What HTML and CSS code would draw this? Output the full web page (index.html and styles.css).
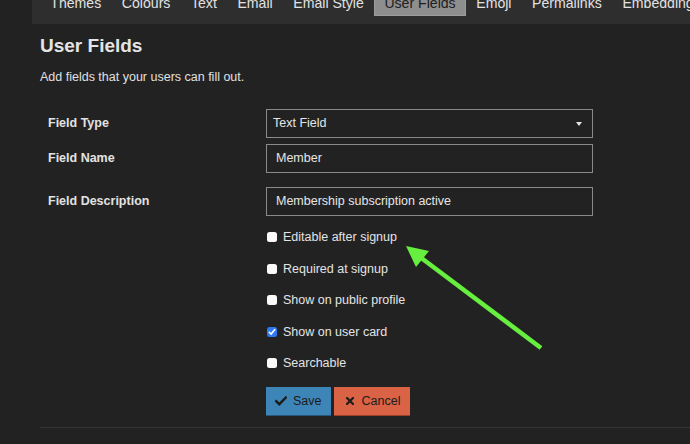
FILE: index.html
```html
<!DOCTYPE html>
<html lang="en">
<head>
<meta charset="utf-8">
<title>User Fields</title>
<link rel="stylesheet" href="styles.css">
</head>
<body>
<nav class="nav-pills">
  <a class="pill">Themes</a>
  <a class="pill">Colours</a>
  <a class="pill">Text</a>
  <a class="pill">Email</a>
  <a class="pill">Email Style</a>
  <a class="pill active">User Fields</a>
  <a class="pill">Emoji</a>
  <a class="pill">Permalinks</a>
  <a class="pill">Embedding</a>
</nav>
<main class="content">
  <h2 class="title">User Fields</h2>
  <p class="desc">Add fields that your users can fill out.</p>
  <form class="field-form">
    <div class="row">
      <label class="label">Field Type</label>
      <div class="select">Text Field<span class="caret"></span></div>
    </div>
    <div class="row">
      <label class="label">Field Name</label>
      <div class="input name-input">Member</div>
    </div>
    <div class="row row-desc">
      <label class="label">Field Description</label>
      <div class="input">Membership subscription active</div>
    </div>
    <div class="checks">
      <label class="check"><span class="box"></span>Editable after signup</label>
      <label class="check"><span class="box"></span>Required at signup</label>
      <label class="check"><span class="box"></span>Show on public profile</label>
      <label class="check"><span class="box checked"><svg viewBox="0 0 10 10" width="10" height="10"><path d="M2.3 5.2 L4.2 7.1 L7.8 2.6" fill="none" stroke="#fff" stroke-width="1.6" stroke-linecap="round" stroke-linejoin="round"/></svg></span>Show on user card</label>
      <label class="check"><span class="box"></span>Searchable</label>
    </div>
    <div class="buttons">
      <button type="button" class="btn btn-save"><svg class="ico-check" viewBox="0 0 12 10" width="12" height="10"><path d="M1.2 5.2 L4.3 8.2 L10.8 1.6" fill="none" stroke="#1c1c1c" stroke-width="2.4" stroke-linecap="square"/></svg>Save</button>
      <button type="button" class="btn btn-cancel"><svg class="ico-x" viewBox="0 0 8 8" width="8" height="8"><path d="M1 1 L7 7 M7 1 L1 7" fill="none" stroke="#1c1c1c" stroke-width="2.2" stroke-linecap="square"/></svg>Cancel</button>
    </div>
  </form>
  <hr class="divider">
</main>
<svg class="arrow" viewBox="0 0 690 444" width="690" height="444">
  <line x1="541" y1="348" x2="420" y2="257" stroke="#66ef3e" stroke-width="4.5"/>
  <polygon points="406,246 429,251 416,267" fill="#66ef3e"/>
</svg>
</body>
</html>
```
FILE: styles.css
```css
html, body {
  margin: 0;
  padding: 0;
}
body {
  background: #222222;
  color: #dddddd;
  font-family: "Liberation Sans", Arial, sans-serif;
  font-size: 12.5px;
  width: 690px;
  height: 444px;
  overflow: hidden;
  position: relative;
}
.nav-pills {
  display: flex;
  align-items: flex-start;
  margin-left: 32px;
  padding-left: 8px;
  height: 24px;
  background: #2e2e2e;
  overflow: hidden;
  white-space: nowrap;
}
.pill {
  flex: none;
  margin-top: -8px;
  height: 24px;
  box-sizing: border-box;
  padding: 3px 10.3px 5px;
  line-height: 16px;
  font-size: 14.1px;
  color: #e2e2e2;
}
.pill.active {
  background: #8e8e8e;
  color: #202020;
  border: 1px solid #9c9c9c;
  padding: 2px 9.3px 4px;
}
.content {
  margin-left: 40px;
}
.title {
  margin: 10px 0 0;
  font-size: 19px;
  line-height: 23px;
  font-weight: bold;
  color: #e4e4e4;
}
.desc {
  margin: 12px 0 0;
  line-height: 16px;
  color: #e0e0e0;
}
.field-form {
  margin-top: 24px;
}
.row {
  display: flex;
  align-items: baseline;
  margin-bottom: 6px;
}
.row-desc {
  margin-top: 14px;
  margin-bottom: 0;
}
.label {
  width: 226px;
  flex: none;
  padding-left: 8px;
  box-sizing: border-box;
  font-weight: bold;
  color: #e2e2e2;
}
.select, .input {
  width: 327px;
  height: 29px;
  box-sizing: border-box;
  border: 1px solid #8a8a8a;
  line-height: 27px;
  color: #e6e6e6;
  background: #222;
}
.select {
  display: flex;
  align-items: center;
  padding: 0 10px 0 6px;
}
.caret {
  margin-left: auto;
  width: 0;
  height: 0;
  border-left: 3.5px solid transparent;
  border-right: 3.5px solid transparent;
  border-top: 4px solid #e6e6e6;
}
.input {
  padding-left: 9px;
}
.checks {
  margin: 5.5px 0 0 226px;
  display: flex;
  flex-direction: column;
}
.check {
  display: flex;
  align-items: center;
  height: 31.5px;
  line-height: 16px;
  color: #e4e4e4;
}
.box {
  width: 10px;
  height: 10px;
  margin-left: 1px;
  margin-right: 6px;
  border-radius: 2.5px;
  background: #fafafa;
  display: flex;
}
.box.checked {
  background: #2f78f2;
}
.buttons {
  margin: 8px 0 0 226px;
  display: flex;
  gap: 3.5px;
}
.btn {
  display: flex;
  align-items: center;
  height: 29px;
  box-sizing: border-box;
  border: none;
  font-family: "Liberation Sans", Arial, sans-serif;
  font-size: 12.5px;
  line-height: 16px;
  color: #1c1c1c;
  margin: 0;
}
.btn-save {
  background: #3e85b7;
  border-bottom: 1px solid #26597c;
  padding: 0 9px;
}
.btn-cancel {
  background: #d96344;
  border-bottom: 1px solid #9c3f27;
  padding: 0 10px 0 11.5px;
}
.ico-check {
  margin-right: 6px;
}
.ico-x {
  margin-right: 8px;
}
.divider {
  margin: 11px 0 0;
  border: none;
  border-top: 1px solid #343434;
  height: 0;
}
.arrow {
  position: absolute;
  left: 0;
  top: 0;
  pointer-events: none;
}
```
